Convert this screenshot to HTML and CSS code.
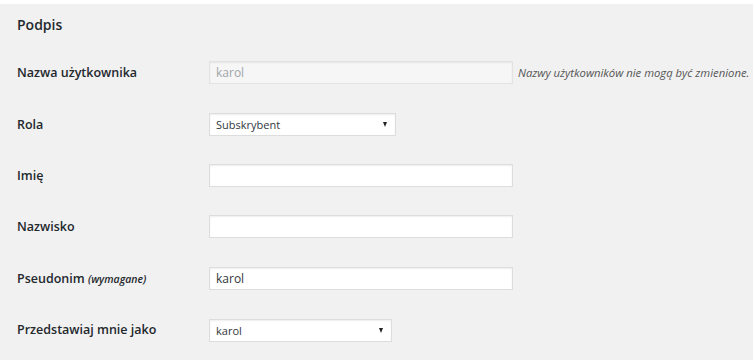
FILE: index.html
```html
<!DOCTYPE html>
<html lang="pl">
<head>
  <meta charset="UTF-8" />
  <meta name="viewport" content="width=device-width, initial-scale=1.0"/>
  <title>Profil</title>
  <link rel="stylesheet" href="styles.css">
</head>
<body>
  <div class="wrap">
    <h2>Podpis</h2>
    <div class="form-table">
      <div class="row">
        <label class="label" for="user_login">Nazwa użytkownika</label>
        <div class="field">
          <input type="text" id="user_login" class="text-input" value="karol" disabled />
          <span class="description">Nazwy użytkowników nie mogą być zmienione.</span>
        </div>
      </div>
      <div class="row">
        <label class="label" for="role">Rola</label>
        <div class="field">
          <div class="select-wrap role">
            <select id="role"><option>Subskrybent</option></select>
          </div>
        </div>
      </div>
      <div class="row">
        <label class="label" for="first_name">Imię</label>
        <div class="field"><input type="text" id="first_name" class="text-input" /></div>
      </div>
      <div class="row">
        <label class="label" for="last_name">Nazwisko</label>
        <div class="field"><input type="text" id="last_name" class="text-input" /></div>
      </div>
      <div class="row">
        <label class="label" for="nickname">Pseudonim <span class="required">(wymagane)</span></label>
        <div class="field"><input type="text" id="nickname" class="text-input" value="karol" /></div>
      </div>
      <div class="row">
        <label class="label" for="display_name">Przedstawiaj mnie jako</label>
        <div class="field">
          <div class="select-wrap display">
            <select id="display_name"><option>karol</option></select>
          </div>
        </div>
      </div>
    </div>
  </div>
</body>
</html>
```

FILE: styles.css
```css
body {
  margin: 0;
  padding: 0;
  background-color: #fff;
  font-family: "Open Sans", Arial, sans-serif;
  color: #23282d;
}
.wrap {
  margin-top: 4px;
  width: 753px;
  height: 356px;
  background-color: #f1f1f1;
  padding: 14px 0 0 17px;
  box-sizing: border-box;
}
.wrap h2 {
  margin: 0;
  font-size: 14px;
  font-weight: 600;
  line-height: 14px;
}
.form-table {
  margin-top: 15px;
}
.row {
  display: flex;
  align-items: center;
  height: 51.4px;
}
.label {
  width: 192px;
  font-size: 12.5px;
  font-weight: 600;
}
.required {
  font-size: 10.5px;
  font-style: italic;
  font-weight: 600;
}
.field {
  display: flex;
  align-items: center;
}
.text-input {
  width: 304px;
  height: 23px;
  box-sizing: border-box;
  margin: 0;
  padding: 0 6px;
  border: 1px solid #ddd;
  box-shadow: inset 0 1px 2px rgba(0, 0, 0, 0.07);
  background-color: #fff;
  font-family: "Open Sans", Arial, sans-serif;
  font-size: 12px;
  color: #32373c;
  outline: none;
}
.text-input:disabled {
  background-color: #f6f6f6;
  color: #a0a5aa;
  border-color: #e2e2e2;
}
.description {
  margin-left: 5px;
  font-size: 11.3px;
  font-style: italic;
  color: #555;
}
.select-wrap {
  position: relative;
}
.select-wrap select {
  appearance: none;
  -webkit-appearance: none;
  height: 23px;
  box-sizing: border-box;
  margin: 0;
  padding: 0 6px;
  border: 1px solid #ddd;
  box-shadow: inset 0 1px 2px rgba(0, 0, 0, 0.07);
  background-color: #fff;
  font-family: "Open Sans", Arial, sans-serif;
  font-size: 11px;
  color: #32373c;
  outline: none;
}
.select-wrap::after {
  content: "";
  position: absolute;
  right: 9px;
  top: 10px;
  border-left: 2.5px solid transparent;
  border-right: 2.5px solid transparent;
  border-top: 5px solid #222;
}
.role select {
  width: 187px;
}
.display select {
  width: 183px;
}
```
